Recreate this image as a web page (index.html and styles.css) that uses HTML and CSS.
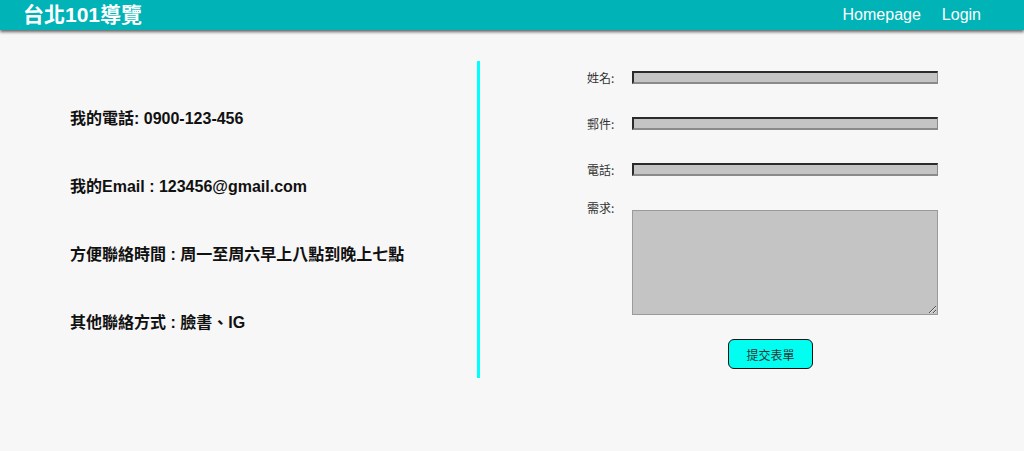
FILE: index.html
```html
<!DOCTYPE html>
<html lang="zh-Hant">
<head>
<meta charset="utf-8">
<title>台北101導覽</title>
<link rel="stylesheet" href="styles.css">
</head>
<body>
<header class="topbar">
  <div class="brand">台北101導覽</div>
  <nav class="nav">
    <a href="#">Homepage</a>
    <a href="#">Login</a>
  </nav>
</header>
<main class="main">
  <section class="info">
    <p>我的電話: 0900-123-456</p>
    <p>我的Email : 123456@gmail.com</p>
    <p>方便聯絡時間 : 周一至周六早上八點到晚上七點</p>
    <p>其他聯絡方式 : 臉書、IG</p>
  </section>
  <section class="formcol">
    <form class="form">
      <div class="row">
        <label class="lbl">姓名:</label>
        <input class="field" type="text">
      </div>
      <div class="row">
        <label class="lbl">郵件:</label>
        <input class="field" type="text">
      </div>
      <div class="row">
        <label class="lbl">電話:</label>
        <input class="field" type="text">
      </div>
      <div class="row row-top">
        <label class="lbl">需求:</label>
        <textarea class="area"></textarea>
      </div>
      <div class="row row-btn">
        <button class="submit" type="button">提交表單</button>
      </div>
    </form>
  </section>
</main>
</body>
</html>
```

FILE: styles.css
```css
html, body {
  margin: 0;
  padding: 0;
}
body {
  background: #f7f7f7;
  font-family: "Liberation Sans", "Noto Sans CJK TC", sans-serif;
  height: 451px;
  overflow: hidden;
}
.topbar {
  height: 30px;
  background: #00b3b7;
  box-shadow: 0 2px 3px rgba(0, 0, 0, 0.6);
  display: flex;
  align-items: center;
  justify-content: space-between;
  padding: 0 43px 0 23px;
  color: #fff;
}
.brand {
  font-size: 21px;
  font-weight: bold;
  line-height: 30px;
}
.nav {
  display: flex;
  gap: 21px;
}
.nav a {
  color: #fff;
  text-decoration: none;
  font-size: 16px;
  line-height: 30px;
}
.main {
  display: flex;
  margin-top: 31px;
}
.info {
  width: 477px;
  height: 317px;
  border-right: 3px solid #00ffff;
  box-sizing: content-box;
}
.info p {
  margin: 48px 0 0 0;
  padding-left: 70px;
  font-size: 16px;
  font-weight: bold;
  line-height: 20px;
  color: #111;
}
.formcol {
  padding: 10px 0 0 107px;
}
.form {
  display: flex;
  flex-direction: column;
  gap: 33px;
}
.row {
  display: flex;
  align-items: center;
  height: 13px;
}
.row-top {
  align-items: flex-start;
  height: auto;
  margin-top: 1px;
}
.row-top .lbl {
  margin-top: -9px;
}
.row-btn {
  height: auto;
  margin-top: -9px;
  padding-left: 141px;
}
.lbl {
  width: 45px;
  flex: none;
  font-family: "Noto Sans CJK TC", sans-serif;
  font-size: 12px;
  color: #333;
  line-height: 14px;
}
.field {
  box-sizing: border-box;
  width: 306px;
  height: 13px;
  margin: 0;
  padding: 0;
  background: #c4c4c4;
  border-style: solid;
  border-width: 2px 1px 2px 2px;
  border-color: #2b2b2b #8a8a8a #8a8a8a #2b2b2b;
}
.area {
  box-sizing: border-box;
  width: 306px;
  height: 105px;
  margin: 0;
  background: #c4c4c4;
  border: 1px solid #9a9a9a;
  padding: 2px;
}
.submit {
  width: 85px;
  height: 30px;
  background: #00fff0;
  border: 1.5px solid #111;
  border-radius: 6px;
  font-family: "Noto Sans CJK TC", sans-serif;
  font-size: 12px;
  color: #333;
  padding: 0;
}
```
